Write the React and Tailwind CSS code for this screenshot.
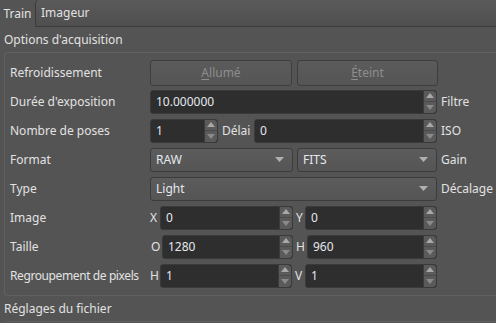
import React from "react";

const Arrows = () => (
  <div className="flex flex-col w-[13px] h-full border-l border-[#3b3b3b] bg-[#5a5a5a] rounded-r-[3px]">
    <div className="flex-1 flex items-center justify-center border-b border-[#4a4a4a]">
      <svg width="8" height="5" viewBox="0 0 8 5"><path d="M0 5 L4 0 L8 5 Z" fill="#a8a8a8" /></svg>
    </div>
    <div className="flex-1 flex items-center justify-center">
      <svg width="8" height="5" viewBox="0 0 8 5"><path d="M0 0 L4 5 L8 0 Z" fill="#8a8a8a" /></svg>
    </div>
  </div>
);

const Spin = ({ value, w, arrows = true }) => (
  <div className={`flex items-center h-[24px] ${w} bg-[#2e2e2e] border border-[#3a3a3a] rounded-[3px] overflow-hidden`}>
    <span className="flex-1 pl-[5px] text-[#e4e8ee]">{value}</span>
    {arrows ? <Arrows /> : null}
  </div>
);

const Combo = ({ value, w }) => (
  <div className={`flex items-center h-[24px] ${w} bg-gradient-to-b from-[#5c5c5c] to-[#555555] border border-[#3c3c3c] rounded-[3px] px-[5px]`}>
    <span className="flex-1 text-[#e4e8ee]">{value}</span>
    <svg width="9" height="5" viewBox="0 0 9 5" className="mr-[3px]"><path d="M0 0 L4.5 5 L9 0 Z" fill="#b0b0b0" /></svg>
  </div>
);

const Btn = ({ label, w }) => (
  <div className={`flex items-center justify-center h-[26px] ${w} bg-gradient-to-b from-[#5b5b5b] to-[#555555] border border-[#3e3e3e] rounded-[3px] text-[#8e8e8e]`}>
    <span><span className="underline underline-offset-2">{label[0]}</span>{label.slice(1)}</span>
  </div>
);

const Row = ({ label, children }) => (
  <div className="flex items-center h-[29px]">
    <div className="w-[140px] shrink-0 whitespace-nowrap">{label}</div>
    {children}
  </div>
);

const Side = ({ children }) => <span className="ml-[4px] whitespace-nowrap">{children}</span>;

export default function App() {
  return (
    <div
      className="w-[496px] h-[323px] overflow-hidden bg-[#545454] text-[12px] text-[#e2e2e2] leading-none"
      style={{ fontFamily: '"Noto Sans", "Open Sans", sans-serif' }}
    >
      <div className="flex h-[27px] w-[600px]">
        <div className="w-[35px] flex items-center justify-center">Train</div>
        <div className="flex-1 flex items-center pl-[5px] bg-gradient-to-b from-[#5a5a5a] to-[#4f4f4f] border-l border-b border-[#3a3a3a] rounded-tl-[4px]">
          Imageur
        </div>
      </div>

      <div className="h-[25px] flex items-center pl-[4px]">Options d'acquisition</div>

      <div className="ml-[4px] w-[600px] border-t border-l border-b border-[#606060] rounded-tl-[4px] rounded-bl-[4px] pl-[5px] pt-[5px] pb-[5px]">
        <Row label="Refroidissement">
          <Btn label="Allumé" w="w-[142px]" />
          <div className="w-[5px]" />
          <Btn label="Éteint" w="w-[141px]" />
        </Row>
        <Row label="Durée d'exposition">
          <Spin value="10.000000" w="w-[287px]" />
          <Side>Filtre</Side>
        </Row>
        <Row label="Nombre de poses">
          <Spin value="1" w="w-[68px]" />
          <span className="w-[36px] pl-[4px]">Délai</span>
          <Spin value="0" w="w-[183px]" />
          <Side>ISO</Side>
        </Row>
        <Row label="Format">
          <Combo value="RAW" w="w-[143px]" />
          <div className="w-[4px]" />
          <Combo value="FITS" w="w-[140px]" />
          <Side>Gain</Side>
        </Row>
        <Row label="Type">
          <Combo value="Light" w="w-[287px]" />
          <Side>Décalage</Side>
        </Row>
        <Row label="Image">
          <span className="w-[10px] pl-[0px]">X</span>
          <Spin value="0" w="w-[133px]" />
          <span className="w-[12px] pl-[3px]">Y</span>
          <Spin value="0" w="w-[132px]" />
        </Row>
        <Row label="Taille">
          <span className="w-[12px] pl-[1px]">O</span>
          <Spin value="1280" w="w-[131px]" />
          <span className="w-[14px] pl-[3px]">H</span>
          <Spin value="960" w="w-[130px]" />
        </Row>
        <div className="flex items-center h-[29px]">
          <span className="whitespace-nowrap w-[140px] tracking-[-0.4px]">Regroupement de pixels</span>
          <span className="w-[10px]">H</span>
          <Spin value="1" w="w-[132px]" />
          <span className="w-[13px] pl-[3px]">V</span>
          <Spin value="1" w="w-[132px]" />
        </div>
      </div>

      <div className="h-[25px] flex items-center pl-[4px]">Réglages du fichier</div>
      <div className="ml-[4px] w-[600px] h-[20px] border-t border-l border-[#606060] rounded-tl-[4px]" />
    </div>
  );
}
